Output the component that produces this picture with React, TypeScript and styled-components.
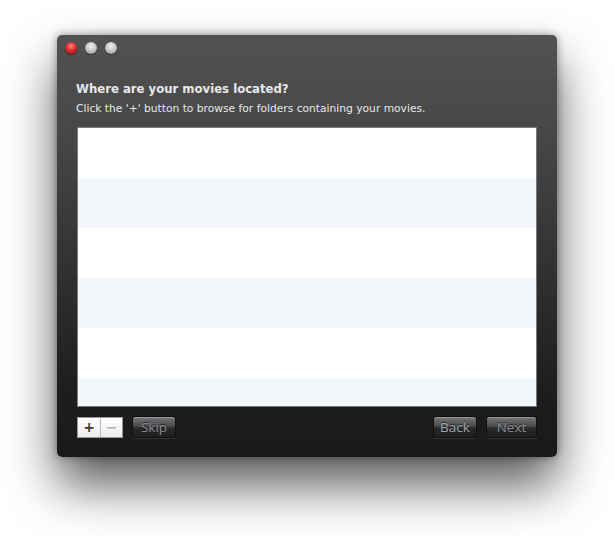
import styled, { createGlobalStyle } from 'styled-components';

const GlobalStyle = createGlobalStyle`
    html, body {
        margin: 0;
        padding: 0;
        background: #ffffff;
    }
`;

const Page = styled.div`
    width: 614px;
    height: 536px;
    padding: 35px 0 0 57px;
    box-sizing: border-box;
    font-family: 'DejaVu Sans', 'Liberation Sans', sans-serif;
`;

const Window = styled.div`
    width: 500px;
    height: 422px;
    box-sizing: border-box;
    border-radius: 5px;
    background: linear-gradient(to bottom, #525252 0%, #464646 25%, #2e2e2e 60%, #1d1d1d 85%, #1a1a1a 100%);
    box-shadow: 0 28px 50px rgba(0, 0, 0, 0.65), 0 0 8px rgba(0, 0, 0, 0.4);
    display: flex;
    flex-direction: column;
    padding: 6px 20px 0 20px;
`;

const TitleBar = styled.div`
    display: flex;
    gap: 8px;
    margin-left: -12px;
    height: 14px;
    align-items: center;
`;

const Light = styled.span<{ $red?: boolean }>`
    width: 12px;
    height: 12px;
    border-radius: 50%;
    background: ${(p) =>
        p.$red
            ? 'radial-gradient(circle at 50% 35%, #ff8a8a 0%, #e22b2b 45%, #9c0f0f 100%)'
            : 'radial-gradient(circle at 50% 35%, #f2f2f2 0%, #c4c4c4 50%, #8a8a8a 100%)'};
    box-shadow: 0 1px 1px rgba(0, 0, 0, 0.5);
`;

const Heading = styled.h1`
    margin: 26px 0 0 -1px;
    font-size: 11.7px;
    font-weight: bold;
    color: #e6e8ec;
    line-height: 16px;
`;

const Hint = styled.p`
    margin: 5px 0 0 -1px;
    font-size: 10.7px;
    color: #e6e8ec;
    line-height: 14px;
`;

const List = styled.div`
    margin-top: 11px;
    width: 460px;
    height: 280px;
    box-sizing: border-box;
    border: 1px solid #7a7a7a;
    background: #ffffff;
    overflow: hidden;
`;

const Row = styled.div<{ $alt: boolean }>`
    height: 50px;
    background: ${(p) => (p.$alt ? '#f3f6fa' : '#ffffff')};
`;

const Footer = styled.div`
    display: flex;
    align-items: center;
    margin-top: 9px;
    gap: 9px;
`;

const Segmented = styled.div`
    display: flex;
    border: 1px solid #9a9a9a;
    background: linear-gradient(to bottom, #ffffff, #ececec);
`;

const SegButton = styled.button<{ $disabled?: boolean }>`
    width: 22px;
    height: 19px;
    padding: 0;
    border: none;
    background: transparent;
    font-family: 'DejaVu Sans', sans-serif;
    font-size: 14px;
    font-weight: bold;
    line-height: 19px;
    color: ${(p) => (p.$disabled ? '#b4b4b4' : '#3a3a3a')};
    & + & {
        border-left: 1px solid #b8b8b8;
    }
`;

const Spacer = styled.div`
    flex: 1;
`;

const Button = styled.button<{ $w: number; $bright?: boolean }>`
    width: ${(p) => p.$w}px;
    height: 22px;
    padding: 0;
    border: 1px solid #0e0e0e;
    border-radius: 3px;
    background: linear-gradient(to bottom, #777777 0%, #4c4c4c 45%, #2a2a2a 55%, #1e1e1e 100%);
    box-shadow: inset 0 1px 0 rgba(255, 255, 255, 0.25), 0 1px 0 rgba(255, 255, 255, 0.12);
    font-family: 'Open Sans', 'DejaVu Sans', sans-serif;
    font-size: 13.5px;
    line-height: 20px;
    color: ${(p) => (p.$bright ? '#a4a8ae' : '#8c9096')};
    text-shadow: 0 -1px 0 rgba(0, 0, 0, 0.6);
`;

const rows = [0, 1, 2, 3, 4, 5];

const App = () => (
    <>
        <GlobalStyle />
        <Page>
            <Window>
                <TitleBar>
                    <Light $red />
                    <Light />
                    <Light />
                </TitleBar>
                <Heading>Where are your movies located?</Heading>
                <Hint>Click the '+' button to browse for folders containing your movies.</Hint>
                <List>
                    {rows.map((r) => (
                        <Row key={r} $alt={r % 2 === 1} />
                    ))}
                </List>
                <Footer>
                    <Segmented>
                        <SegButton>+</SegButton>
                        <SegButton $disabled>−</SegButton>
                    </Segmented>
                    <Button $w={44}>Skip</Button>
                    <Spacer />
                    <Button $w={44} $bright>Back</Button>
                    <Button $w={51}>Next</Button>
                </Footer>
            </Window>
        </Page>
    </>
);

export default App;
